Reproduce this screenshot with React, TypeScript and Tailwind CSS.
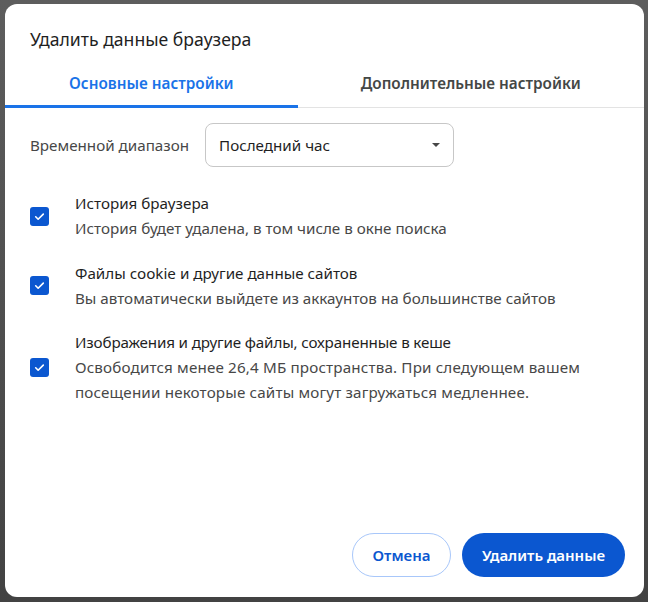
import React from "react";

function Check() {
  return (
    <div className="w-[19px] h-[19px] shrink-0 rounded-[3px] bg-[#0b57d0] flex items-center justify-center">
      <svg width="13" height="13" viewBox="0 0 24 24" fill="none">
        <path d="M5 12.5l4.5 4.5L19 7.5" stroke="#ffffff" strokeWidth="3" strokeLinecap="round" strokeLinejoin="round" />
      </svg>
    </div>
  );
}

function Item({ title, desc, wide }: { title: string; desc: React.ReactNode; wide?: boolean }) {
  return (
    <div className="flex items-center">
      <Check />
      <div className="ml-[26px] leading-[25px] text-[15.2px] whitespace-nowrap">
        <div className={wide ? "text-[#1f1f1f] tracking-[-0.15px]" : "text-[#1f1f1f]"}>{title}</div>
        <div className={wide ? "text-[#474747] tracking-[0.16px]" : "text-[#474747]"}>{desc}</div>
      </div>
    </div>
  );
}

export default function App() {
  return (
    <div
      className="w-[648px] h-[602px] bg-gradient-to-b from-[#5d5d5d] to-[#424242] pt-[4px] pl-[5px]"
      style={{ fontFamily: '"Noto Sans", "Open Sans", sans-serif' }}
    >
      <div className="w-[639px] h-[593px] bg-white rounded-[12px] flex flex-col">
        <div className="pt-[23px] pl-[25px] text-[17.6px] leading-[24px] text-[#1f1f1f]">
          Удалить данные браузера
        </div>
        <div className="mt-[11px] flex border-b border-[#e3e3e3] whitespace-nowrap">
          <div className="-mb-px h-[46px] shrink-0 px-[64px] flex items-center border-b-[3px] border-[#1a73e8] text-[#1a73e8] text-[15.3px] font-semibold">
            Основные настройки
          </div>
          <div className="h-[45px] flex-1 flex items-center justify-center text-[#444746] text-[15.3px] font-semibold pb-[3px]">
            Дополнительные настройки
          </div>
        </div>
        <div className="mt-[15px] pl-[25px] flex items-center">
          <div className="w-[175px] text-[15.2px] text-[#474747]">Временной диапазон</div>
          <div className="w-[249px] h-[44px] rounded-[8px] border border-[#c7c7c7] flex items-center justify-between pl-[13px] pr-[13px] text-[15.2px] text-[#1f1f1f]">
            <span>Последний час</span>
            <svg width="8" height="4" viewBox="0 0 8 4">
              <path d="M0 0h8L4 4z" fill="#474747" />
            </svg>
          </div>
        </div>
        <div className="mt-[24px] pl-[25px] flex flex-col gap-[19.5px]">
          <Item title="История браузера" desc="История будет удалена, в том числе в окне поиска" />
          <Item title="Файлы cookie и другие данные сайтов" desc="Вы автоматически выйдете из аккаунтов на большинстве сайтов" />
          <Item
            wide
            title="Изображения и другие файлы, сохраненные в кеше"
            desc={
              <>
                Освободится менее 26,4 МБ пространства. При следующем вашем
                <br />
                посещении некоторые сайты могут загружаться медленнее.
              </>
            }
          />
        </div>
        <div className="mt-auto flex justify-end gap-[11px] pr-[19px] pb-[20px]">
          <button className="h-[44px] w-[99px] rounded-full border border-[#a8c7fa] text-[#0b57d0] text-[15px] font-semibold">
            Отмена
          </button>
          <button className="h-[44px] w-[163px] rounded-full bg-[#0b57d0] text-white text-[15px] font-semibold">
            Удалить данные
          </button>
        </div>
      </div>
    </div>
  );
}
